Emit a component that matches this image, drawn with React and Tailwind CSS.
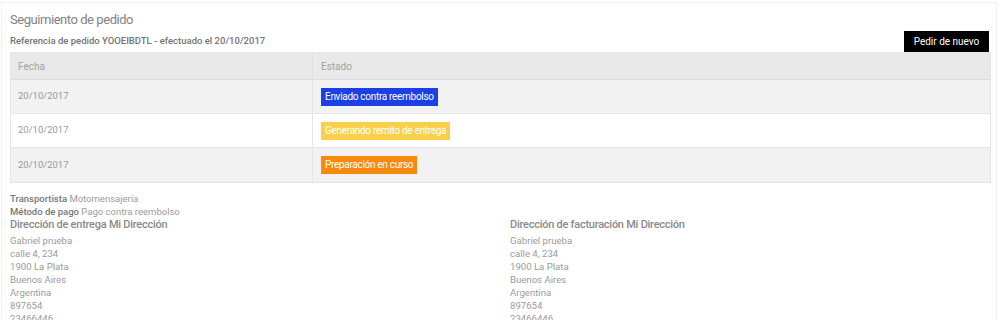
import React from "react";

const rows = [
  { date: "20/10/2017", state: "Enviado contra reembolso", color: "bg-[#1b40e6]", bg: "bg-[#f2f2f2]" },
  { date: "20/10/2017", state: "Generando remito de entrega", color: "bg-[#f9d04a]", bg: "bg-white" },
  { date: "20/10/2017", state: "Preparación en curso", color: "bg-[#f8890f]", bg: "bg-[#f2f2f2]" },
];

const address = ["Gabriel prueba", "calle 4, 234", "1900 La Plata", "Buenos Aires", "Argentina", "897654", "23466446"];

function Address({ title }) {
  return (
    <div className="flex flex-col">
      <h3 className="text-[11px] leading-[14px] font-medium tracking-[-0.25px] text-[#8a8a8a]">{title}</h3>
      <div className="mt-[2px] text-[9.6px] leading-[13px] text-[#9b9b9b]">
        {address.map((line, i) => (
          <div key={i}>{line}</div>
        ))}
      </div>
    </div>
  );
}

export default function App() {
  return (
    <div className="w-[1000px] h-[320px] overflow-hidden bg-white" style={{ fontFamily: "Roboto, 'Liberation Sans', sans-serif" }}>
      <div className="mt-[2px] ml-[1px] w-[996px] border border-[#f0f0f0] px-[8px] pt-[9px]">
        {/* cabecera */}
        <h1 className="text-[13px] leading-[16px] tracking-[-0.45px] text-[#828282]">Seguimiento de pedido</h1>
        <div className="flex items-end justify-between mt-[3px]">
          <p className="pb-[5px] text-[9.5px] leading-[13px] font-medium text-[#747474]">
            Referencia de pedido YOOEIBDTL - efectuado el 20/10/2017
          </p>
          <button className="mr-[-1px] h-[21px] w-[85px] bg-black text-white text-[10px]">Pedir de nuevo</button>
        </div>

        {/* tabla de estados */}
        <div className="w-[981px] border border-[#e4e4e4]">
          <div className="flex h-[27px] bg-[#e9e9e9] text-[#a2a2a2] text-[10px] border-b border-[#dcdcdc]">
            <div className="w-[302px] flex items-center pl-[7px] border-r border-[#dfdfdf]">Fecha</div>
            <div className="flex-1 flex items-center pl-[8px]">Estado</div>
          </div>
          {rows.map((r, i) => (
            <div key={i} className={`flex h-[34px] ${r.bg} ${i < rows.length - 1 ? "border-b border-[#e6e6e6]" : ""}`}>
              <div className="w-[302px] flex items-center pl-[7px] text-[9.5px] text-[#999999] border-r border-[#e6e6e6]">{r.date}</div>
              <div className="flex-1 flex items-center pl-[8px]">
                <span className={`${r.color} text-white px-[4px] h-[18px] leading-[18px] text-[10px] tracking-[-0.3px]`}>{r.state}</span>
              </div>
            </div>
          ))}
        </div>

        {/* datos de envío */}
        <div className="mt-[9px] text-[9.5px] leading-[13px] text-[#9b9b9b]">
          <div>
            <span className="font-medium text-[#777777]">Transportista</span> Motomensajería
          </div>
          <div>
            <span className="font-medium text-[#777777]">Método de pago</span> Pago contra reembolso
          </div>
        </div>
        <div className="grid grid-cols-2 gap-[22px]">
          <Address title="Dirección de entrega Mi Dirección" />
          <Address title="Dirección de facturación Mi Dirección" />
        </div>
      </div>
    </div>
  );
}
